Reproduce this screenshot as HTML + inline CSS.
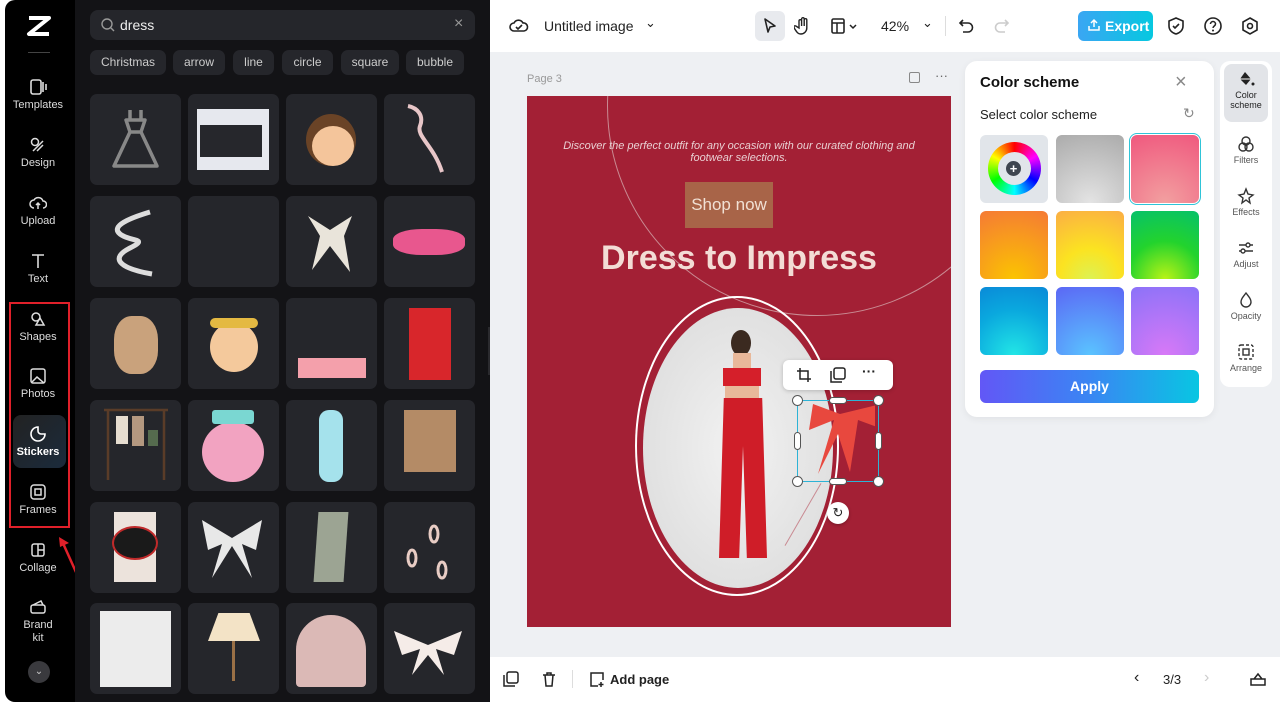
<!DOCTYPE html>
<html><head><meta charset="utf-8"><style>
*{margin:0;padding:0;box-sizing:border-box}
body{width:1280px;height:706px;overflow:hidden;background:#fff;font-family:"Liberation Sans",sans-serif;position:relative}
.abs{position:absolute}
.side{left:5px;top:0;width:70px;height:702px;background:#000;border-radius:10px 0 0 10px}
.nav{position:absolute;left:5px;width:60px;text-align:center;color:#ddd;font-size:11px}
.nav svg{display:block;margin:0 auto 3px}
.panel{left:75px;top:0;width:415px;height:702px;background:#131316}
.card{position:absolute;width:91px;height:91px;background:#25262b;border-radius:7px;overflow:hidden}
.chip{position:absolute;top:50px;height:25px;background:#25262b;border-radius:7px;color:#ccc;font-size:12px;line-height:25px;text-align:center}
.main{left:490px;top:52px;width:790px;height:605px;background:#eef0f3}
.sw{position:absolute;width:68px;height:68px;border-radius:6px}
.rt{position:absolute;left:1222px;width:48px;text-align:center;font-size:9px;color:#555}
</style></head><body>
<div class="abs side"></div>
<svg class="abs" style="left:26px;top:15px" width="26" height="22" viewBox="0 0 26 22"><path d="M3 3h20L3 19h20" fill="none" stroke="#fff" stroke-width="4" stroke-linejoin="round"/></svg>
<div class="abs" style="left:28px;top:52px;width:22px;height:1px;background:#444"></div>
<div class="nav" style="top:78px;left:8px"><svg width="18" height="18"><rect x="2" y="2" width="10" height="14" rx="2" fill="none" stroke="#ddd" stroke-width="1.6"/><path d="M14 4v10M17 6v6" stroke="#ddd" stroke-width="1.6"/></svg>Templates</div>
<div class="nav" style="top:136px;left:8px"><svg width="18" height="18"><circle cx="6" cy="6" r="3.5" fill="none" stroke="#ddd" stroke-width="1.5"/><path d="M4 15l10-10M8 15l6-6" stroke="#ddd" stroke-width="1.5"/></svg>Design</div>
<div class="nav" style="top:194px;left:8px"><svg width="18" height="18"><path d="M5 14a4 4 0 010-8 5 5 0 019 1 3.5 3.5 0 010 7M9 15V9M7 11l2-2 2 2" fill="none" stroke="#ddd" stroke-width="1.5"/></svg>Upload</div>
<div class="nav" style="top:252px;left:8px"><svg width="18" height="18"><path d="M3 3h12M9 3v13" stroke="#ddd" stroke-width="1.6"/></svg>Text</div>
<div class="abs" style="left:9px;top:302px;width:61px;height:226px;border:2px solid #e0202a"></div>
<div class="nav" style="top:310px;left:8px"><svg width="18" height="18"><circle cx="7" cy="7" r="4" fill="none" stroke="#ddd" stroke-width="1.5"/><path d="M11 8l4 7H7z" fill="none" stroke="#ddd" stroke-width="1.5"/></svg>Shapes</div>
<div class="nav" style="top:367px;left:8px"><svg width="18" height="18"><rect x="2" y="2" width="14" height="14" rx="2" fill="none" stroke="#ddd" stroke-width="1.5"/><path d="M3 15l5-5 7 6" fill="none" stroke="#ddd" stroke-width="1.5"/></svg>Photos</div>
<div class="abs" style="left:13px;top:415px;width:53px;height:53px;border-radius:8px;background:linear-gradient(135deg,#222,#1b2b3c)"></div>
<div class="nav" style="top:425px;left:8px;color:#fff;font-weight:bold"><svg width="18" height="18"><path d="M9 2a7 7 0 107 7h-4a3 3 0 01-3-3z" fill="none" stroke="#fff" stroke-width="1.6"/></svg>Stickers</div>
<div class="nav" style="top:483px;left:8px"><svg width="18" height="18"><rect x="2" y="2" width="14" height="14" rx="3" fill="none" stroke="#ddd" stroke-width="1.5"/><rect x="6" y="6" width="6" height="6" fill="none" stroke="#ddd" stroke-width="1.5"/></svg>Frames</div>
<svg class="abs" style="left:58px;top:535px" width="26" height="50"><path d="M22 46L4 6" stroke="#e0202a" stroke-width="2.5"/><path d="M1 2l10 6-9 4z" fill="#e0202a"/></svg>
<div class="nav" style="top:541px;left:8px"><svg width="18" height="18"><rect x="3" y="3" width="12" height="12" rx="2" fill="none" stroke="#ddd" stroke-width="1.5"/><path d="M9 3v12M9 9h6" stroke="#ddd" stroke-width="1.5"/></svg>Collage</div>
<div class="nav" style="top:598px;left:8px;line-height:13px"><svg width="18" height="18"><rect x="2" y="7" width="14" height="8" rx="2" fill="none" stroke="#ddd" stroke-width="1.5"/><path d="M4 7l8-4 2 4" fill="none" stroke="#ddd" stroke-width="1.5"/></svg>Brand<br>kit</div>
<div class="abs" style="left:28px;top:661px;width:22px;height:22px;border-radius:50%;background:#3a3a3e;color:#ccc;font-size:10px;text-align:center;line-height:22px">⌄</div>

<div class="abs panel"></div>
<div class="abs" style="left:90px;top:10px;width:385px;height:30px;background:#25262b;border-radius:8px"></div>
<svg class="abs" style="left:100px;top:17px" width="16" height="16"><circle cx="7" cy="7" r="5" fill="none" stroke="#999" stroke-width="1.4"/><path d="M11 11l3 3" stroke="#999" stroke-width="1.4"/></svg>
<div class="abs" style="left:120px;top:17px;color:#eee;font-size:14px">dress</div>
<div class="abs" style="left:454px;top:15px;color:#999;font-size:16px">×</div>
<div class="chip" style="left:90px;width:76px">Christmas</div>
<div class="chip" style="left:173px;width:52px">arrow</div>
<div class="chip" style="left:233px;width:41px">line</div>
<div class="chip" style="left:282px;width:51px">circle</div>
<div class="chip" style="left:341px;width:58px">square</div>
<div class="chip" style="left:406px;width:58px">bubble</div>

<!-- grid -->
<div class="card" style="left:90px;top:94px"><svg width="91" height="91"><path d="M40 16v10M51 16v10M36 26h19l-4 12h-11zM40 38L24 72h43L51 38" fill="none" stroke="#888" stroke-width="3.5" stroke-linejoin="round"/></svg></div>
<div class="card" style="left:188px;top:94px"><div class="abs" style="left:9px;top:15px;width:72px;height:61px;background:#e6e8ee"></div><div class="abs" style="left:12px;top:31px;width:62px;height:32px;background:#26272c"></div></div>
<div class="card" style="left:286px;top:94px"><div class="abs" style="left:20px;top:20px;width:50px;height:52px;border-radius:50%;background:#6a4326"></div><div class="abs" style="left:26px;top:32px;width:42px;height:40px;border-radius:50%;background:#f4c59b"></div></div>
<div class="card" style="left:384px;top:94px"><svg width="91" height="91"><path d="M24 12c10 2 16 10 12 20s14 20 22 46" fill="none" stroke="#e8c6c8" stroke-width="4"/></svg></div>

<div class="card" style="left:90px;top:196px"><svg width="91" height="91"><path d="M60 16c-20 6-40 14-30 22s30 4 10 14-12 20 22 26" fill="none" stroke="#ddd" stroke-width="5"/></svg></div>
<div class="card" style="left:188px;top:196px"></div>
<div class="card" style="left:286px;top:196px"><svg width="91" height="91"><path d="M22 20l22 14 22-14-8 20 6 36-20-26-18 24 8-34z" fill="#e9e4da"/></svg></div>
<div class="card" style="left:384px;top:196px"><div class="abs" style="left:9px;top:33px;width:72px;height:26px;border-radius:40%;background:#e8578e"></div></div>

<div class="card" style="left:90px;top:298px"><div class="abs" style="left:24px;top:18px;width:44px;height:58px;border-radius:40%;background:#c9a27c"></div></div>
<div class="card" style="left:188px;top:298px"><div class="abs" style="left:22px;top:24px;width:48px;height:50px;border-radius:50%;background:#f4c99c"></div><div class="abs" style="left:22px;top:20px;width:48px;height:10px;border-radius:5px;background:#e4b942"></div></div>
<div class="card" style="left:286px;top:298px"><div class="abs" style="left:12px;top:60px;width:68px;height:20px;background:#f4a0ab"></div></div>
<div class="card" style="left:384px;top:298px"><div class="abs" style="left:25px;top:10px;width:42px;height:72px;background:#d8262b"></div></div>

<div class="card" style="left:90px;top:400px"><svg width="91" height="91"><path d="M14 10h64M18 10v70M74 10v70" stroke="#5a3c28" stroke-width="2.5"/><rect x="26" y="16" width="12" height="28" fill="#e6ddd0"/><rect x="42" y="16" width="12" height="30" fill="#b49880"/><rect x="58" y="30" width="10" height="16" fill="#556b4e"/></svg></div>
<div class="card" style="left:188px;top:400px"><div class="abs" style="left:14px;top:22px;width:62px;height:60px;border-radius:50%;background:#f2a3c1"></div><div class="abs" style="left:24px;top:10px;width:42px;height:14px;border-radius:3px;background:#7ad7d2"></div></div>
<div class="card" style="left:286px;top:400px"><div class="abs" style="left:33px;top:10px;width:24px;height:72px;border-radius:10px;background:#a5e2ec"></div></div>
<div class="card" style="left:384px;top:400px"><div class="abs" style="left:20px;top:10px;width:52px;height:62px;background:#b48b66"></div></div>

<div class="card" style="left:90px;top:502px"><div class="abs" style="left:24px;top:10px;width:42px;height:70px;background:#ece3dc"></div><div class="abs" style="left:22px;top:24px;width:46px;height:34px;border-radius:50%;background:#1a1a1a;border:2px solid #c02a2a"></div></div>
<div class="card" style="left:188px;top:502px"><svg width="91" height="91"><path d="M14 18l30 18 30-18-6 30-14-6 10 34-20-32-20 32 10-34-14 6z" fill="#e8e8e8"/></svg></div>
<div class="card" style="left:286px;top:502px"><div class="abs" style="left:30px;top:10px;width:30px;height:70px;background:#9ca493;transform:skewX(-4deg)"></div></div>
<div class="card" style="left:384px;top:502px"><svg width="91" height="91"><g fill="none" stroke="#e8ccc4" stroke-width="3"><ellipse cx="28" cy="56" rx="4" ry="8"/><ellipse cx="50" cy="32" rx="4" ry="8"/><ellipse cx="58" cy="68" rx="4" ry="8"/></g></svg></div>

<div class="card" style="left:90px;top:603px"><div class="abs" style="left:10px;top:8px;width:71px;height:76px;background:#ececec"></div></div>
<div class="card" style="left:188px;top:603px"><div class="abs" style="left:20px;top:10px;width:52px;height:28px;background:#f3e3c6;clip-path:polygon(20% 0,80% 0,100% 100%,0 100%)"></div><div class="abs" style="left:44px;top:38px;width:3px;height:40px;background:#9a7046"></div></div>
<div class="card" style="left:286px;top:603px"><div class="abs" style="left:10px;top:12px;width:70px;height:72px;border-radius:35px 35px 4px 4px;background:#dbb9b6"></div></div>
<div class="card" style="left:384px;top:603px"><svg width="91" height="91"><path d="M10 28l34 14 34-14-8 24-18-6 8 26-16-20-16 20 8-26-18 6z" fill="#f5ece8"/></svg></div>

<!-- handle -->
<div class="abs" style="left:488px;top:327px;width:7px;height:48px;background:#2a2a2e;border-radius:0 4px 4px 0"></div>

<!-- topbar -->
<svg class="abs" style="left:509px;top:16px" width="20" height="20"><path d="M5 15a4 4 0 010-8 5 5 0 019 0 4 4 0 011 8z" fill="none" stroke="#222" stroke-width="1.6"/><path d="M7 11l2 2 4-4" fill="none" stroke="#222" stroke-width="1.6"/></svg>
<div class="abs" style="left:544px;top:18px;font-size:14px;color:#222">Untitled image</div>
<div class="abs" style="left:645px;top:15px;font-size:13px;color:#222">⌄</div>
<div class="abs" style="left:755px;top:11px;width:30px;height:30px;background:#e8eaee;border-radius:6px"></div>
<svg class="abs" style="left:761px;top:17px" width="18" height="18"><path d="M4 2l10 7-5 1-2 5z" fill="none" stroke="#222" stroke-width="1.6" stroke-linejoin="round"/></svg>
<svg class="abs" style="left:794px;top:16px" width="18" height="20"><path d="M5 12V5a1.3 1.3 0 012.6 0v5V3a1.3 1.3 0 012.6 0v7V4a1.3 1.3 0 012.6 0v8a6 6 0 01-6 6c-3 0-4-2-6-5l-1-2a1.3 1.3 0 012-1z" fill="none" stroke="#222" stroke-width="1.4"/></svg>
<svg class="abs" style="left:830px;top:17px" width="30" height="18"><rect x="2" y="2" width="12" height="14" rx="1.5" fill="none" stroke="#222" stroke-width="1.6"/><path d="M2 6h12M7 6v10M20 8l3 3 3-3" fill="none" stroke="#222" stroke-width="1.5"/></svg>
<div class="abs" style="left:881px;top:18px;font-size:14px;color:#222">42%</div>
<div class="abs" style="left:922px;top:15px;font-size:13px;color:#222">⌄</div>
<div class="abs" style="left:945px;top:16px;width:1px;height:20px;background:#ddd"></div>
<svg class="abs" style="left:958px;top:17px" width="18" height="18"><path d="M5 3L2 6l3 3M2 6h8a4.5 4.5 0 010 9H5" fill="none" stroke="#222" stroke-width="1.6"/></svg>
<svg class="abs" style="left:992px;top:17px" width="18" height="18"><path d="M13 3l3 3-3 3M16 6H8a4.5 4.5 0 000 9h5" fill="none" stroke="#ccc" stroke-width="1.6"/></svg>
<div class="abs" style="left:1078px;top:11px;width:75px;height:30px;border-radius:6px;background:linear-gradient(90deg,#3aa6f3,#06c8e0);color:#fff;font-size:14px;font-weight:bold;line-height:30px;padding-left:27px">Export</div>
<svg class="abs" style="left:1087px;top:18px" width="14" height="14"><path d="M7 9V2M4 5l3-3 3 3M2 8v4h10V8" fill="none" stroke="#fff" stroke-width="1.5"/></svg>
<svg class="abs" style="left:1166px;top:16px" width="20" height="20"><path d="M10 2l7 3v5c0 4-3 7-7 8-4-1-7-4-7-8V5z M7 10l2 2 4-4" fill="none" stroke="#222" stroke-width="1.6"/></svg>
<svg class="abs" style="left:1203px;top:16px" width="20" height="20"><circle cx="10" cy="10" r="8" fill="none" stroke="#222" stroke-width="1.6"/><path d="M7.5 8a2.5 2.5 0 015 0c0 2-2.5 2-2.5 4" fill="none" stroke="#222" stroke-width="1.5"/><circle cx="10" cy="14.5" r="1" fill="#222"/></svg>
<svg class="abs" style="left:1240px;top:16px" width="20" height="20"><path d="M10 2l7 4v8l-7 4-7-4V6z" fill="none" stroke="#222" stroke-width="1.6"/><circle cx="10" cy="10" r="2.5" fill="none" stroke="#222" stroke-width="1.6"/></svg>

<div class="abs main"></div>
<div class="abs" style="left:527px;top:73px;font-size:11px;color:#999">Page 3</div>
<div class="abs" style="left:909px;top:72px;width:11px;height:11px;border:1.4px solid #888;border-radius:2px"></div>
<div class="abs" style="left:935px;top:68px;font-size:13px;color:#666">···</div>

<!-- canvas -->
<div class="abs" style="left:527px;top:96px;width:424px;height:531px;background:#a32035;overflow:hidden">
<div class="abs" style="left:80px;top:-200px;width:420px;height:420px;border-radius:50%;border:1.5px solid #c98a92"></div>
<div class="abs" style="left:20px;top:44px;width:384px;text-align:center;color:#e9cfd2;font-size:11px;font-style:italic;line-height:12px">Discover the perfect outfit for any occasion with our curated clothing and footwear selections.</div>
<div class="abs" style="left:158px;top:86px;width:88px;height:46px;background:#a86448;color:#f1e0d4;font-size:17px;line-height:46px;text-align:center;font-family:'Liberation Sans Narrow','Liberation Sans',sans-serif">Shop now</div>
<div class="abs" style="left:0;top:143px;width:424px;text-align:center;color:#f3dcd5;font-size:34px;font-weight:bold">Dress to Impress</div>
<div class="abs" style="left:108px;top:200px;width:204px;height:300px;border-radius:50%;border:2px solid #fff"></div>
<div class="abs" style="left:116px;top:212px;width:190px;height:280px;border-radius:50%;background:radial-gradient(#f2f2f2,#d9d9d9);overflow:hidden">
<div class="abs" style="left:88px;top:22px;width:20px;height:26px;border-radius:50%;background:#3b2a20"></div>
<div class="abs" style="left:90px;top:45px;width:18px;height:18px;background:#e8b89a"></div>
<div class="abs" style="left:80px;top:60px;width:38px;height:18px;background:#d51f2a"></div>
<div class="abs" style="left:82px;top:78px;width:34px;height:14px;background:#e8b89a"></div>
<div class="abs" style="left:76px;top:90px;width:48px;height:160px;background:#cf1d28;clip-path:polygon(10% 0,90% 0,100% 100%,58% 100%,50% 30%,42% 100%,0 100%)"></div>
</div>
<div class="abs" style="left:240px;top:418px;width:72px;height:1px;background:#c98a92;transform:rotate(-60deg)"></div>
</div>

<!-- selection -->
<div class="abs" style="left:783px;top:360px;width:110px;height:30px;background:#fff;border-radius:6px;box-shadow:0 1px 4px rgba(0,0,0,.2)"></div>
<svg class="abs" style="left:796px;top:367px" width="16" height="16"><path d="M4 1v11h11M1 4h11v11" fill="none" stroke="#222" stroke-width="1.5"/></svg>
<svg class="abs" style="left:830px;top:367px" width="16" height="16"><rect x="4" y="1" width="11" height="11" rx="2" fill="none" stroke="#222" stroke-width="1.5"/><path d="M1 4v11h11" fill="none" stroke="#222" stroke-width="1.5"/></svg>
<div class="abs" style="left:862px;top:363px;font-size:14px;color:#222;font-weight:bold">···</div>
<svg class="abs" style="left:805px;top:400px" width="70" height="80"><path d="M35 14L8 4 4 30l25-10-16 54 20-40 12 38 8-52 27 10-4-26z" fill="#e8483e"/></svg>
<div class="abs" style="left:797px;top:400px;width:82px;height:82px;border:1.5px solid #2db3d6"></div>
<div class="abs" style="left:792px;top:395px;width:11px;height:11px;border-radius:50%;background:#fff;border:1px solid #555"></div>
<div class="abs" style="left:873px;top:395px;width:11px;height:11px;border-radius:50%;background:#fff;border:1px solid #555"></div>
<div class="abs" style="left:792px;top:476px;width:11px;height:11px;border-radius:50%;background:#fff;border:1px solid #555"></div>
<div class="abs" style="left:873px;top:476px;width:11px;height:11px;border-radius:50%;background:#fff;border:1px solid #555"></div>
<div class="abs" style="left:829px;top:397px;width:18px;height:7px;border-radius:4px;background:#fff;border:1px solid #555"></div>
<div class="abs" style="left:829px;top:478px;width:18px;height:7px;border-radius:4px;background:#fff;border:1px solid #555"></div>
<div class="abs" style="left:794px;top:432px;width:7px;height:18px;border-radius:4px;background:#fff;border:1px solid #555"></div>
<div class="abs" style="left:875px;top:432px;width:7px;height:18px;border-radius:4px;background:#fff;border:1px solid #555"></div>
<div class="abs" style="left:827px;top:502px;width:22px;height:22px;border-radius:50%;background:#fff;box-shadow:0 1px 3px rgba(0,0,0,.3);text-align:center;line-height:22px;font-size:13px;color:#222">↻</div>

<!-- color panel -->
<div class="abs" style="left:965px;top:61px;width:249px;height:356px;background:#fff;border-radius:12px;box-shadow:0 2px 8px rgba(0,0,0,.06)"></div>
<div class="abs" style="left:980px;top:74px;font-size:15px;font-weight:bold;color:#111">Color scheme</div>
<div class="abs" style="left:1175px;top:72px;font-size:20px;color:#888;line-height:20px">×</div>
<div class="abs" style="left:980px;top:107px;font-size:13px;color:#222">Select color scheme</div>
<div class="abs" style="left:1183px;top:105px;font-size:14px;color:#888">↻</div>
<div class="sw" style="left:980px;top:135px;background:#e1e5ea"></div>
<div class="abs" style="left:988px;top:142px;width:53px;height:53px;border-radius:50%;background:conic-gradient(red,#f0f,#00f,#0ff,#0f0,#ff0,red)"></div>
<div class="abs" style="left:998px;top:152px;width:33px;height:33px;border-radius:50%;background:#e1e5ea"></div>
<div class="abs" style="left:1006px;top:161px;width:15px;height:15px;border-radius:50%;background:#3f4650;color:#fff;font-size:13px;line-height:15px;text-align:center;font-weight:bold">+</div>
<div class="sw" style="left:1056px;top:135px;background:radial-gradient(circle at 50% 100%,#e4e4e4,#ababab)"></div>
<div class="abs" style="left:1129px;top:133px;width:72px;height:72px;border:1.5px solid #2fc4d8;border-radius:8px"></div>
<div class="sw" style="left:1131px;top:135px;background:radial-gradient(circle at 50% 100%,#f2a0a0,#f0587e)"></div>
<div class="sw" style="left:980px;top:211px;background:radial-gradient(circle at 50% 100%,#fbc400,#f57a35)"></div>
<div class="sw" style="left:1056px;top:211px;background:radial-gradient(circle at 50% 100%,#ddf253,#fbe321 40%,#fbae45)"></div>
<div class="sw" style="left:1131px;top:211px;background:radial-gradient(circle at 50% 100%,#b9f316,#23d32d 50%,#06c16a)"></div>
<div class="sw" style="left:980px;top:287px;background:radial-gradient(circle at 50% 100%,#22e6e6,#0aa8de 60%,#0a8ad8)"></div>
<div class="sw" style="left:1056px;top:287px;background:radial-gradient(circle at 50% 100%,#5ac4ff,#5b67f5)"></div>
<div class="sw" style="left:1131px;top:287px;background:radial-gradient(circle at 50% 100%,#d879f7,#8b72f8)"></div>
<div class="abs" style="left:980px;top:370px;width:219px;height:33px;border-radius:6px;background:linear-gradient(90deg,#6257f6,#3a86f3 50%,#08c6e2);color:#fff;font-size:14px;font-weight:bold;text-align:center;line-height:33px">Apply</div>

<!-- right tool strip -->
<div class="abs" style="left:1220px;top:61px;width:52px;height:326px;background:#fff;border-radius:10px"></div>
<div class="abs" style="left:1224px;top:64px;width:44px;height:58px;background:#e2e4e8;border-radius:8px"></div>
<div class="rt" style="top:70px;color:#222"><svg width="18" height="18" style="display:block;margin:0 auto 2px"><path d="M8 2l6 7-5 6-6-6z" fill="#222"/><path d="M3 9h11" stroke="#fff"/><circle cx="16" cy="14" r="1.5" fill="#222"/></svg>Color<br>scheme</div>
<div class="rt" style="top:135px"><svg width="18" height="18" style="display:block;margin:0 auto 2px"><g fill="none" stroke="#333" stroke-width="1.4"><circle cx="9" cy="6" r="4"/><circle cx="6" cy="12" r="4"/><circle cx="12" cy="12" r="4"/></g></svg>Filters</div>
<div class="rt" style="top:187px"><svg width="18" height="18" style="display:block;margin:0 auto 2px"><path d="M9 2l2 5 5 1-4 3 1 5-4-3-4 3 1-5-4-3 5-1z" fill="none" stroke="#333" stroke-width="1.4"/></svg>Effects</div>
<div class="rt" style="top:239px"><svg width="18" height="18" style="display:block;margin:0 auto 2px"><path d="M2 6h14M2 12h14" stroke="#333" stroke-width="1.4"/><circle cx="11" cy="6" r="2" fill="#fff" stroke="#333" stroke-width="1.4"/><circle cx="6" cy="12" r="2" fill="#fff" stroke="#333" stroke-width="1.4"/></svg>Adjust</div>
<div class="rt" style="top:291px"><svg width="18" height="18" style="display:block;margin:0 auto 2px"><path d="M9 2c3 4 5 6 5 9a5 5 0 01-10 0c0-3 2-5 5-9z" fill="none" stroke="#333" stroke-width="1.4"/></svg>Opacity</div>
<div class="rt" style="top:343px"><svg width="18" height="18" style="display:block;margin:0 auto 2px"><rect x="2" y="2" width="14" height="14" rx="2" fill="none" stroke="#333" stroke-width="1.4" stroke-dasharray="3 2"/><rect x="6" y="6" width="6" height="6" fill="none" stroke="#333" stroke-width="1.4"/></svg>Arrange</div>

<!-- bottom bar -->
<svg class="abs" style="left:503px;top:671px" width="16" height="16"><rect x="4" y="1" width="11" height="11" rx="2" fill="none" stroke="#222" stroke-width="1.5"/><path d="M1 4v11h11" fill="none" stroke="#222" stroke-width="1.5"/></svg>
<svg class="abs" style="left:541px;top:671px" width="16" height="16"><path d="M2 4h12M6 4V2h4v2M4 4l1 11h6l1-11" fill="none" stroke="#222" stroke-width="1.5"/></svg>
<div class="abs" style="left:572px;top:670px;width:1px;height:18px;background:#ddd"></div>
<svg class="abs" style="left:588px;top:670px" width="18" height="18"><path d="M10 16H3V3h12v7M13 12v5M10.5 14.5h5" fill="none" stroke="#222" stroke-width="1.5"/></svg>
<div class="abs" style="left:610px;top:672px;font-size:13px;color:#222;font-weight:bold">Add page</div>
<div class="abs" style="left:1134px;top:669px;font-size:16px;color:#222">‹</div>
<div class="abs" style="left:1163px;top:672px;font-size:13px;color:#222">3/3</div>
<div class="abs" style="left:1204px;top:669px;font-size:16px;color:#ccc">›</div>
<svg class="abs" style="left:1249px;top:671px" width="18" height="16"><path d="M2 8h14v6H2zM5 8l4-5 4 5" fill="none" stroke="#222" stroke-width="1.5"/></svg>
</body></html>
